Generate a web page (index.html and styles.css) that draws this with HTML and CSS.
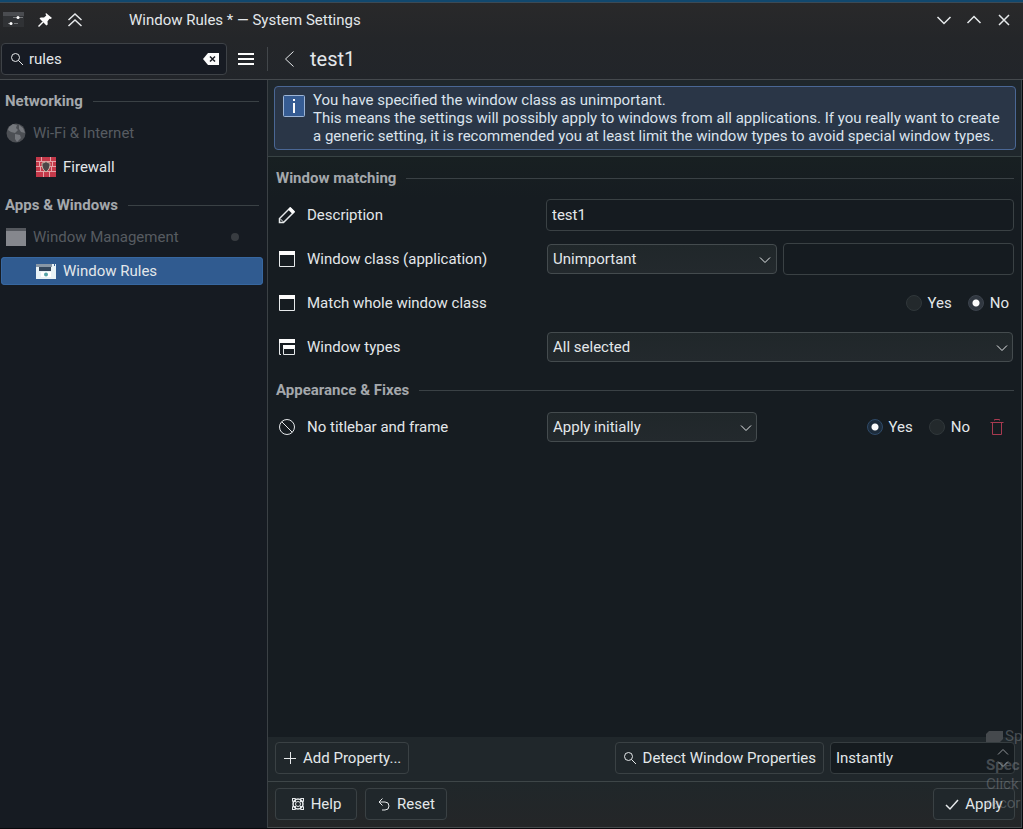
FILE: index.html
```
<!DOCTYPE html>
<html lang="en">
<head>
  <meta charset="UTF-8">
  <title>Window Rules * — System Settings</title>
  <link rel="stylesheet" href="styles.css">
</head>
<body>
  <div class="window">
    <header class="titlebar">
      <svg class="app-icon" width="22" height="20" viewBox="0 0 22 20">
        <rect x="0" y="2" width="21" height="15" fill="#303235"/>
        <rect x="0" y="2" width="21" height="4" fill="#4a4c50"/>
        <path d="M5 13.500h3M10 7.500h4M16 7.500h4M11 13.500h4" stroke="#77797c"/>
        <circle cx="15" cy="7.500" r="1.500" fill="#fff"/>
        <circle cx="8" cy="13.500" r="1.500" fill="#fff"/>
      </svg>
      <button class="icon-btn" aria-label="Keep above">
        <svg width="16" height="16" viewBox="0 0 16 16">
          <path d="M9 1l6 5-1.500 1-1-.2-2 2.400.2 3.300-1.300 1L2.500 6.500l1.200-1.100 3.300.2 2.300-2.200-.8-1.300z" fill="#fcfcfc"/>
          <path d="M6 10l-4.500 4.500" stroke="#fcfcfc" stroke-width="1.500"/>
        </svg>
      </button>
      <button class="icon-btn" aria-label="Shade">
        <svg width="16" height="16" viewBox="0 0 16 16"><path d="M1.500 8L8 2l6.500 6M1.500 14L8 8l6.500 6" class="line bold"/></svg>
      </button>
      <h1 class="title">Window Rules * — System Settings</h1>
      <button class="icon-btn" aria-label="Minimize">
        <svg width="16" height="16" viewBox="0 0 16 16"><path d="M1.500 5L8 11.500 14.500 5" class="line bold"/></svg>
      </button>
      <button class="icon-btn" aria-label="Maximize">
        <svg width="16" height="16" viewBox="0 0 16 16"><path d="M1.500 11L8 4.500l6.500 6.500" class="line bold"/></svg>
      </button>
      <button class="icon-btn" aria-label="Close">
        <svg width="16" height="16" viewBox="0 0 16 16"><path d="M3 3l10 10M13 3L3 13" class="line bold"/></svg>
      </button>
    </header>

    <div class="toolbar">
      <div class="toolbar-left">
        <div class="search">
          <svg width="14" height="14" viewBox="0 0 14 14"><circle cx="5.500" cy="5.500" r="4" class="line"/><path d="M8.500 8.500l4.500 4.500" class="line"/></svg>
          <input type="text" class="search-input" value="rules" aria-label="Search">
          <button class="icon-btn" aria-label="Clear search">
            <svg width="16" height="12" viewBox="0 0 16 12"><path d="M0 6l5-6h11v12H5z" fill="#fcfcfc"/><path d="M7 3.500l5 5M12 3.500l-5 5" stroke="#1a1d24" stroke-width="1.500"/></svg>
          </button>
        </div>
        <button class="icon-btn" aria-label="Menu">
          <svg width="16" height="12" viewBox="0 0 16 12"><path d="M0 0h16v2H0zM0 5h16v2H0zM0 10h16v2H0z" fill="#fcfcfc"/></svg>
        </button>
      </div>
      <div class="toolbar-right">
        <button class="icon-btn" aria-label="Back">
          <svg width="16" height="16" viewBox="0 0 16 16"><path d="M12.500.5L4.500 8l8 7.500" class="line"/></svg>
        </button>
        <h2 class="page-title">test1</h2>
      </div>
    </div>

    <div class="content">
      <nav class="sidebar">
        <h3 class="section">Networking</h3>
        <a href="#" class="nav-item parent">
          <svg width="20" height="20" viewBox="0 0 20 20">
            <circle cx="10" cy="10" r="9.500" fill="#4c4f54"/>
            <path d="M3 4l4-3 4 1-1 3 2 2-3 3-4-1-3-2zM13 2l4 3 2 5-4-1-2-3zM9 11l5 1 1 3-4 4-2-3z" fill="#74777c"/>
          </svg>
          <span class="nav-text">Wi-Fi &amp; Internet</span>
        </a>
        <a href="#" class="nav-item child">
          <svg width="20" height="20" viewBox="0 0 20 20">
            <rect width="20" height="20" fill="#c4394a"/>
            <path d="M0 4.500h20M0 9.500h20M0 14.500h20M5.500 0v4M14.500 0v4M3.500 5v4M16.500 5v4M4.500 10v4M15.500 10v4M7.500 15v5M13.500 15v5" stroke="#e5a4a8"/>
            <path d="M6 6q2.500 0 4-1.500Q11.500 6 14 6q.5 6-4 9-4.500-3-4-9z" fill="#4c4648" stroke="#c9b6a4"/>
          </svg>
          <span>Firewall</span>
        </a>
        <h3 class="section">Apps &amp; Windows</h3>
        <a href="#" class="nav-item parent">
          <svg width="20" height="20" viewBox="0 0 20 20"><rect y="1" width="20" height="18" fill="#85878d"/><rect y="1" width="20" height="3" fill="#55585e"/></svg>
          <span class="nav-text">Window Management</span>
          <i class="dot"></i>
        </a>
        <a href="#" class="nav-item child active">
          <svg width="20" height="20" viewBox="0 0 20 20">
            <path d="M0 3h20v15H0z" fill="#e8f2f6"/>
            <path d="M0 3h16v3H0z" fill="#8796a5"/>
            <path d="M3 6h12v4H3z" fill="#34475c"/>
            <path d="M5 11h10v5H5z" fill="#fff"/>
            <circle cx="10" cy="13.500" r="2" fill="#54a3a6"/>
            <path d="M18.500 1v4" stroke="#345d91"/>
          </svg>
          <span>Window Rules</span>
        </a>
      </nav>

      <main class="main">
        <div class="message-area">
          <div class="message">
            <svg width="22" height="22" viewBox="0 0 22 22"><rect x=".5" y=".5" width="21" height="21" rx="1" fill="#365c93" stroke="#9db5d6"/><path d="M10 4h2v2h-2zM10 8h2v10h-2z" fill="#fcfcfc"/></svg>
            <p class="message-text">You have specified the window class as unimportant.<br>This means the settings will possibly apply to windows from all applications. If you really want to create a generic setting, it is recommended you at least limit the window types to avoid special window types.</p>
          </div>
        </div>

        <form class="rules">
          <h3 class="section">Window matching</h3>
          <div class="row">
            <label class="row-label" for="description">
              <svg width="18" height="18" viewBox="0 0 18 18"><path d="M1.500 16.500v-4L12 2l4 4L5.500 16.500z" class="line bold"/><path d="M12.500 1l4.500 4.500-2.500 2.500L10 3.500z" fill="#fcfcfc"/><path d="M2 12.500l3.500 3.500" class="line"/></svg>
              Description
            </label>
            <div class="field"><input type="text" id="description" class="text-input" value="test1"></div>
          </div>
          <div class="row">
            <label class="row-label" for="wmclass">
              <svg width="18" height="18" viewBox="0 0 18 18"><path d="M1.500 1.500h15v15h-15z" class="line"/><path d="M1 1h16v4H1z" fill="#fcfcfc"/></svg>
              Window class (application)
            </label>
            <div class="field halves">
              <div class="select-box">
                <select id="wmclass" class="select"><option>Unimportant</option></select>
                <svg class="arrow" width="12" height="8" viewBox="0 0 12 8"><path d="M1 1.500l5 5 5-5" class="line"/></svg>
              </div>
              <input type="text" class="text-input" aria-label="Window class value">
            </div>
          </div>
          <div class="row">
            <div class="row-label">
              <svg width="18" height="18" viewBox="0 0 18 18"><path d="M1.500 1.500h15v15h-15z" class="line"/><path d="M1 1h16v4H1z" fill="#fcfcfc"/></svg>
              Match whole window class
            </div>
            <div class="field radios">
              <label class="radio"><input type="radio" name="whole">Yes</label>
              <label class="radio"><input type="radio" name="whole" checked>No</label>
            </div>
          </div>
          <div class="row">
            <label class="row-label" for="types">
              <svg width="18" height="18" viewBox="0 0 18 18"><path d="M1 1h16v4H1zM5 7h12v4H5z" fill="#fcfcfc"/><path d="M1.500 5v11.500H3M5.500 10v6.500h11V10" class="line"/></svg>
              Window types
            </label>
            <div class="field">
              <div class="select-box">
                <select id="types" class="select"><option>All selected</option></select>
                <svg class="arrow" width="12" height="8" viewBox="0 0 12 8"><path d="M1 1.500l5 5 5-5" class="line"/></svg>
              </div>
            </div>
          </div>

          <h3 class="section">Appearance &amp; Fixes</h3>
          <div class="row">
            <label class="row-label" for="noborder">
              <svg width="18" height="18" viewBox="0 0 18 18"><circle cx="9" cy="9" r="7.500" class="line"/><path d="M3.700 3.700l10.600 10.600" class="line"/></svg>
              No titlebar and frame
            </label>
            <div class="field">
              <div class="select-box policy">
                <select id="noborder" class="select"><option>Apply initially</option></select>
                <svg class="arrow" width="12" height="8" viewBox="0 0 12 8"><path d="M1 1.500l5 5 5-5" class="line"/></svg>
              </div>
              <div class="radios removable">
                <label class="radio blue"><input type="radio" name="frame" checked>Yes</label>
                <label class="radio"><input type="radio" name="frame">No</label>
                <button type="button" class="icon-btn" aria-label="Remove property">
                  <svg width="14" height="16" viewBox="0 0 14 16"><path d="M.5 3.500h13M4.500 1.500V.5h5v1M2.500 3.500v12h9v-12" fill="none" stroke="#a83a50"/></svg>
                </button>
              </div>
            </div>
          </div>
        </form>

        <div class="actions">
          <button class="btn">
            <svg width="14" height="14" viewBox="0 0 14 14"><path d="M7.500 1v12M1 7.500h12" class="line"/></svg>
            Add Property...
          </button>
          <div class="actions-right">
            <button class="btn">
              <svg width="14" height="14" viewBox="0 0 14 14"><circle cx="5.500" cy="5.500" r="4" class="line"/><path d="M8.500 8.500l4.500 4.500" class="line"/></svg>
              Detect Window Properties
            </button>
            <div class="spin">
              <input type="text" class="spin-input" value="Instantly" aria-label="Detection delay">
              <div class="spin-buttons">
                <button class="icon-btn" aria-label="Increase"><svg width="12" height="8" viewBox="0 0 12 8"><path d="M1 6.500l5-5 5 5" class="line"/></svg></button>
                <button class="icon-btn" aria-label="Decrease"><svg width="12" height="8" viewBox="0 0 12 8"><path d="M1 1.500l5 5 5-5" class="line"/></svg></button>
              </div>
            </div>
          </div>
        </div>

        <footer class="footer">
          <button class="btn wide">
            <svg width="14" height="14" viewBox="0 0 14 14"><circle cx="7" cy="7" r="5" class="line bold"/><circle cx="7" cy="7" r="2.500" class="line"/><path d="M1 1.500h3.500V5M13 1.500H9.500V5M1 12.500h3.500V9M13 12.500H9.500V9M1.500 1v3.500H5M12.500 1v3.500H9M1.500 13V9.500H5M12.500 13V9.500H9" class="line"/></svg>
            Help
          </button>
          <button class="btn wide">
            <svg width="14" height="14" viewBox="0 0 14 14"><path d="M5.500 1.500L2 5l3.500 3.500M2 5h6a4 4 0 0 1 0 8H5" class="line"/></svg>
            Reset
          </button>
          <button class="btn wide apply">
            <svg width="14" height="14" viewBox="0 0 14 14"><path d="M1 8l4 4 8-9" class="line bold"/></svg>
            Apply
          </button>
        </footer>
      </main>
    </div>

    <!-- drag tooltip fading out at the screen corner -->
    <div class="ghost">
      <p class="ghost-title"><svg width="17" height="11" viewBox="0 0 17 11"><path d="M0 3l3-3h14v8l-3 3H0z" fill="#45494d"/></svg>Sp</p>
      <p class="strong">Spec</p>
      <p>Click</p>
      <p>recor</p>
    </div>
  </div>
</body>
</html>
```

FILE: styles.css
```
* {
  box-sizing: border-box;
  margin: 0;
  padding: 0;
}

body {
  background-color: #08090c;
  color: #e3e7ea;
  font-family: Roboto, "Noto Sans", sans-serif;
  font-size: 15px;
  line-height: 18px;
}

button,
input,
select {
  font: inherit;
  color: inherit;
}

svg {
  display: block;
  flex: none;
}

.line {
  fill: none;
  stroke: #e6e9eb;
  stroke-width: 1;
}

.line.bold {
  stroke-width: 1.5;
}

.window {
  position: relative;
  display: flex;
  flex-direction: column;
  min-height: 100vh;
  padding-bottom: 1px;
  border-top: 2px solid #11486e;
  overflow: hidden;
}

/* title bar and toolbar */
.titlebar {
  display: flex;
  align-items: center;
  gap: 14px;
  height: 37px;
  padding: 0 11px 2px 3px;
  border-top: 1px solid #3c4a55;
  background: linear-gradient(#29292a, #242629);
}

.titlebar .app-icon {
  margin-right: -2px;
}

.icon-btn {
  display: flex;
  border: none;
  background: none;
}

.title {
  flex: 1;
  margin-left: 32px;
  font-size: 15px;
  font-weight: 400;
}

.toolbar {
  display: flex;
  height: 41px;
  border-bottom: 1px solid #45494d;
  background: linear-gradient(#242629, #22252a);
}

.toolbar-left {
  display: flex;
  align-items: center;
  gap: 11px;
  width: 267px;
  padding-left: 1px;
}

.search {
  display: flex;
  align-items: center;
  gap: 5px;
  width: 226px;
  height: 32px;
  padding: 0 7px 0 8px;
  border: 1px solid #3e4247;
  border-radius: 4px;
  background-color: #171b23;
}

.search-input {
  flex: 1;
  min-width: 0;
  border: none;
  background: none;
}

.toolbar-right {
  display: flex;
  align-items: center;
  gap: 13px;
  height: 24px;
  margin: 8px 0;
  padding-left: 13px;
  border-left: 1px solid #43474b;
}

.page-title {
  font-size: 20px;
  font-weight: 400;
  line-height: 24px;
}

/* sidebar */
.content {
  flex: 1;
  display: flex;
}

.sidebar {
  display: flex;
  flex-direction: column;
  width: 267px;
  background-color: #161b22;
}

.section {
  display: flex;
  align-items: center;
  gap: 10px;
  height: 36px;
  padding-top: 6px;
  font-size: 15px;
  font-weight: 700;
  color: #a4a8ac;
}

.section::after {
  content: "";
  flex: 1;
  height: 1px;
  background-color: #3a4145;
}

.sidebar .section {
  padding-left: 5px;
  margin-right: 8px;
}

.nav-item {
  display: flex;
  align-items: center;
  gap: 7px;
  height: 28px;
  margin: 3px 4px 3px 1px;
  padding-left: 5px;
  border-radius: 4px;
  color: #e3e7ea;
  text-decoration: none;
}

.nav-item.parent {
  color: #575b61;
}

.nav-item.child {
  padding-left: 35px;
}

.nav-item.active {
  background-color: #305b90;
  box-shadow: inset 0 0 0 1px #3767a0;
}

.nav-text {
  flex: 1;
}

.dot {
  width: 8px;
  height: 8px;
  margin-right: 24px;
  border-radius: 4px;
  background-color: #383c41;
}

/* main column */
.main {
  flex: 1;
  display: flex;
  flex-direction: column;
  min-width: 0;
  margin-right: 1px;
  border-left: 1px solid #3b4145;
  border-right: 1px solid #3b4449;
  border-bottom: 1px solid #454a4c;
  background-color: #161c21;
}

.message-area {
  padding: 6px 5px 6px 6px;
  border-bottom: 1px solid #384344;
  background-color: #1f272c;
}

.message {
  display: flex;
  gap: 8px;
  padding: 4px 8px;
  border: 1px solid #4a6795;
  border-radius: 4px;
  background-color: #2a3647;
  color: #dbe3ed;
}

.message svg {
  margin-top: 4px;
}

.rules {
  flex: 1;
  padding: 0 7px 0 8px;
  background: linear-gradient(#182022, #161c21 40px);
}

.row {
  display: flex;
  align-items: center;
  min-height: 44px;
}

.row-label {
  display: flex;
  align-items: center;
  gap: 11px;
  width: 270px;
  padding-left: 2px;
}

.field {
  flex: 1;
  display: flex;
  align-items: center;
  gap: 6px;
  min-width: 0;
}

.field.halves {
  display: grid;
  grid-template-columns: 1fr 1fr;
}

.text-input {
  flex: 1;
  min-width: 0;
  height: 32px;
  padding: 0 5px;
  border: 1px solid #3a4144;
  border-radius: 4px;
  background-color: #151b20;
}

.select-box {
  position: relative;
  flex: 1;
  padding: 0 1px;
}

.halves .select-box {
  padding-right: 0;
}

.select-box.policy {
  flex: none;
  width: 212px;
}

.select {
  display: block;
  width: 100%;
  height: 30px;
  padding: 0 28px 0 5px;
  appearance: none;
  border: 1px solid #444b4e;
  border-radius: 4px;
  background: linear-gradient(#20272a, #23292d);
}

.arrow {
  position: absolute;
  top: 12px;
  right: 6px;
  pointer-events: none;
}

.radios {
  display: flex;
  justify-content: flex-end;
  gap: 16px;
  padding-right: 5px;
}

.radios.removable {
  flex: 1;
  align-items: center;
  padding-right: 10px;
}

.removable .icon-btn {
  margin-left: 4px;
}

.radio {
  display: flex;
  align-items: center;
  gap: 6px;
}

.radio input {
  width: 16px;
  height: 16px;
  appearance: none;
  border: 1px solid #30373a;
  border-radius: 8px;
  background-color: #23292c;
}

.radio input:checked {
  border-color: #3c434d;
  background: radial-gradient(circle, #fcfcfc 3px, #303740 4px);
}

.radio.blue input:checked {
  border-color: #2f4a68;
  background: radial-gradient(circle, #fcfcfc 3px, #1d2c3c 4px);
}

/* bottom bars */
.actions {
  display: flex;
  justify-content: space-between;
  padding: 5px 6px 7px 7px;
  border-bottom: 1px solid #3e4648;
  background-color: #20272b;
}

.actions-right {
  display: flex;
  gap: 6px;
}

.btn {
  display: flex;
  align-items: center;
  justify-content: center;
  gap: 6px;
  height: 32px;
  padding: 0 7px;
  border: 1px solid #3a4144;
  border-radius: 4px;
  background-color: #20272b;
}

.btn.wide {
  min-width: 82px;
}

.spin {
  display: flex;
  align-items: center;
  width: 185px;
  height: 32px;
  padding: 0 5px;
  border: 1px solid #363d40;
  border-radius: 4px;
  background-color: #151b1f;
}

.spin-input {
  flex: 1;
  min-width: 0;
  border: none;
  background: none;
}

.spin-buttons {
  display: flex;
  flex-direction: column;
  gap: 4px;
  opacity: 0.6;
}

.footer {
  display: flex;
  gap: 8px;
  padding: 6px 6px 7px 7px;
  background: linear-gradient(#20272a, #242628);
}

.apply {
  margin-left: auto;
}

.ghost {
  position: absolute;
  right: 0;
  bottom: 16px;
  width: 37px;
  overflow: hidden;
  white-space: nowrap;
  line-height: 19px;
  color: rgba(150, 156, 162, 0.4);
  pointer-events: none;
}

.ghost-title {
  display: flex;
  align-items: center;
  gap: 2px;
}

.ghost .strong {
  margin-top: 10px;
  font-weight: 700;
}
```
